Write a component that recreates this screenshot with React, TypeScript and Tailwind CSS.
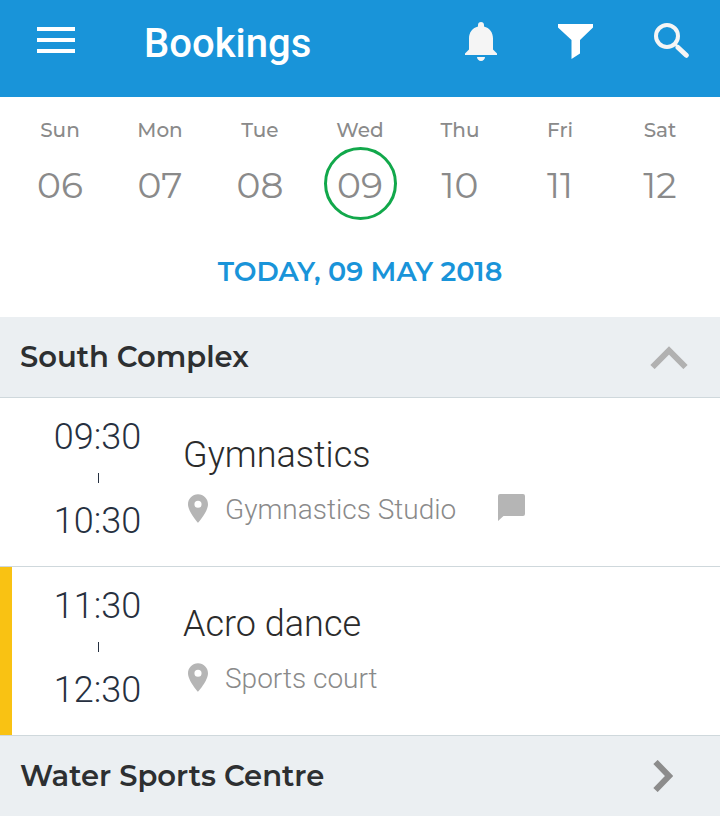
import { useState } from 'react';

type Booking = {
  id: string;
  start: string;
  end: string;
  title: string;
  place: string;
  hasNote?: boolean;
  highlighted?: boolean;
};

type Complex = {
  id: string;
  name: string;
  bookings: Booking[];
};

const days = [
  { label: 'Sun', date: '06' },
  { label: 'Mon', date: '07' },
  { label: 'Tue', date: '08' },
  { label: 'Wed', date: '09' },
  { label: 'Thu', date: '10' },
  { label: 'Fri', date: '11' },
  { label: 'Sat', date: '12' },
];

const complexes: Complex[] = [
  {
    id: 'south',
    name: 'South Complex',
    bookings: [
      { id: 'b1', start: '09:30', end: '10:30', title: 'Gymnastics', place: 'Gymnastics Studio', hasNote: true },
      { id: 'b2', start: '11:30', end: '12:30', title: 'Acro dance', place: 'Sports court', highlighted: true },
    ],
  },
  { id: 'water', name: 'Water Sports Centre', bookings: [] },
];

export default function App() {
  const [selected, setSelected] = useState('09');
  const [open, setOpen] = useState<string | null>('south');

  return (
    <div className="min-h-screen bg-white font-['Montserrat','Inter',sans-serif]">
      <TopBar />
      <nav aria-label="Week" className="grid grid-cols-7 px-2.5 pt-4">
        {days.map((day) => (
          <button key={day.date} className="flex flex-col items-center text-[#8a8a8a]" onClick={() => setSelected(day.date)}>
            <span className="text-[20px] leading-[34px] font-medium">{day.label}</span>
            <span
              className={
                day.date === selected
                  ? 'flex size-[73px] items-center justify-center rounded-full border-3 border-[#12a84b] pt-0.5 text-[36px]'
                  : 'flex size-[73px] items-center justify-center pt-0.5 text-[36px]'
              }
            >
              {day.date}
            </span>
          </button>
        ))}
      </nav>
      <h2 className="pt-8 pb-[25px] text-center text-[27px] leading-10 font-semibold text-[#1994d9]">
        TODAY, {selected} MAY 2018
      </h2>
      <main>
        {complexes.map((complex) => (
          <ComplexSection
            key={complex.id}
            complex={complex}
            open={open === complex.id}
            onToggle={() => setOpen(open === complex.id ? null : complex.id)}
          />
        ))}
      </main>
    </div>
  );
}

function TopBar() {
  return (
    <header className="flex h-[97px] items-center bg-[#1994d9] pr-[31px] pb-[15px] pl-[37px] text-white">
      <button aria-label="Menu" className="pb-0.5">
        <svg className="h-[26px] w-[38px]" viewBox="0 0 38 26" fill="currentColor">
          <path d="M0 0h38v4H0zM0 11h38v4H0zM0 22h38v4H0z" />
        </svg>
      </button>
      <h1 className="ml-[69px] flex-1 pt-1.5 font-['Roboto',sans-serif] text-[40px] leading-[48px] font-medium">Bookings</h1>
      <div className="flex items-center gap-[61px]">
        <button aria-label="Notifications" className="text-[#f5f5f5]">
          <svg className="h-[39px] w-8" viewBox="0 0 32 39" fill="currentColor">
            <path d="M16 0c-1.800 0-3 1.300-3 3v1.600C7.500 6 4 10.500 4 16.500V27.500L0 31.500V33h32v-1.500l-4-4V16.500C28 10.500 24.500 6 19 4.600V3c0-1.700-1.200-3-3-3z" />
            <path d="M12 35h8c0 2.300-1.800 4-4 4s-4-1.700-4-4z" />
          </svg>
        </button>
        <button aria-label="Filter">
          <svg className="size-[35px]" viewBox="0 0 35 35" fill="currentColor">
            <path d="M0 0h35v3.500L22 16v13.500L13.500 35V16L0 3.500z" />
          </svg>
        </button>
        <button aria-label="Search" className="pb-0.5 text-[#f5f5f5]">
          <svg className="size-[35px]" viewBox="0 0 35 35" fill="none" stroke="currentColor">
            <circle cx="13" cy="13" r="11" strokeWidth="4" />
            <path d="M20.500 20.500L24 24" strokeWidth="2.500" />
            <path d="M24 24.500L32.300 32.300" strokeWidth="5" strokeLinecap="round" />
          </svg>
        </button>
      </div>
    </header>
  );
}

function ComplexSection({ complex, open, onToggle }: { complex: Complex; open: boolean; onToggle: () => void }) {
  return (
    <section>
      <button
        aria-expanded={open}
        className="flex h-[81px] w-full items-center justify-between border-b border-[#cfd8dc] bg-[#ebeff2] pl-5 text-left"
        onClick={onToggle}
      >
        <span className="text-[29px] leading-10 font-semibold text-[#2d2f31]">{complex.name}</span>
        {open ? (
          <svg className="mr-8 h-6 w-[38px] text-[#b1b1b1]" viewBox="0 0 38 24" fill="none" stroke="currentColor" strokeWidth="6">
            <path d="M2.500 22L19 5.500L35.500 22" />
          </svg>
        ) : (
          <svg className="mr-[47px] h-8 w-5 text-[#8c8c8c]" viewBox="0 0 20 32" fill="none" stroke="currentColor" strokeWidth="6">
            <path d="M2.500 2L16 16L2.500 30" />
          </svg>
        )}
      </button>
      {open && (
        <ul>
          {complex.bookings.map((booking) => (
            <BookingRow key={booking.id} booking={booking} />
          ))}
        </ul>
      )}
    </section>
  );
}

function BookingRow({ booking }: { booking: Booking }) {
  return (
    <li className="flex border-b border-[#cfd8dc] font-['Roboto',sans-serif] font-light">
      <div className={booking.highlighted ? 'w-3 bg-[#f9c213]' : 'w-3'} />
      <div className="flex w-[171px] flex-col items-center pt-[18px] pb-6 text-[36px] leading-[42px] text-[#263040]">
        <time>{booking.start}</time>
        <span className="flex h-[42px] items-center pb-0.5 pl-0.5">
          <span className="h-2.5 w-px bg-[#263040]" />
        </span>
        <time>{booking.end}</time>
      </div>
      <div className="flex-1 pt-9">
        <h3 className="text-[36px] leading-[42px] text-[#2b2b2b]">{booking.title}</h3>
        <div className="mt-[13px] flex items-center pl-[5px] text-[#b5b5b5]">
          <svg className="mb-1 h-[29px] w-5" viewBox="5 2 14 20" fill="currentColor">
            <path d="M12 2C8.130 2 5 5.130 5 9c0 5.250 7 13 7 13s7-7.750 7-13c0-3.870-3.130-7-7-7zm0 9.500a2.500 2.500 0 0 1 0-5 2.500 2.500 0 0 1 0 5z" />
          </svg>
          <span className="ml-[17px] text-[28px] leading-[42px] text-[#8a8a8a]">{booking.place}</span>
          {booking.hasNote && (
            <svg className="mb-1.5 ml-[42px] size-[27px]" viewBox="0 0 27 27" fill="currentColor" role="img" aria-label="Has note">
              <path d="M2 0h23a2 2 0 0 1 2 2v18a2 2 0 0 1-2 2H5.500L0 27V2a2 2 0 0 1 2-2z" />
            </svg>
          )}
        </div>
      </div>
    </li>
  );
}
